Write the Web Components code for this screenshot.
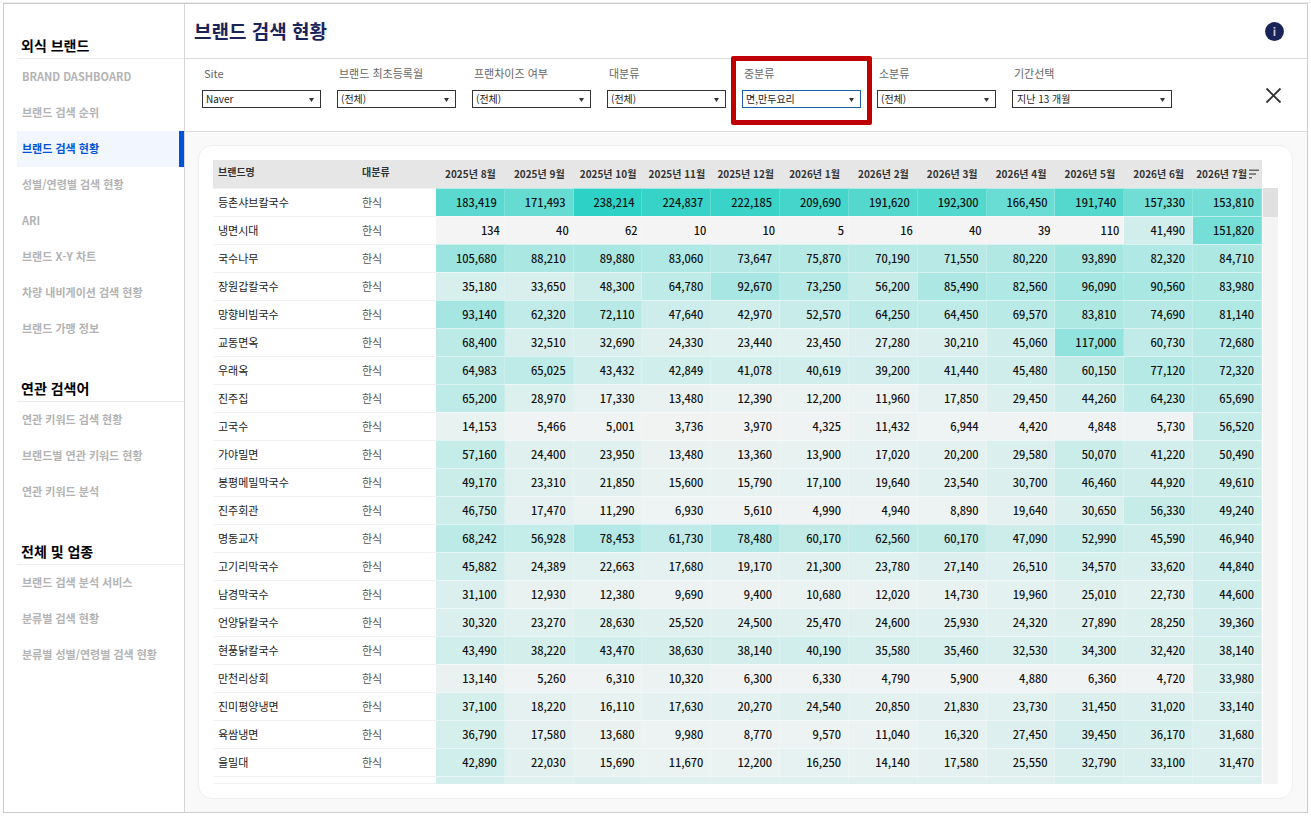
<!DOCTYPE html>
<html lang="ko">
<head>
<meta charset="utf-8">
<meta name="viewport" content="width=device-width, initial-scale=1">
<title>브랜드 검색 현황</title>
<style>
  body {
    margin: 0;
    padding-top: 2px;
    background: #fff;
    color: #333;
    font-family: "Noto Sans CJK KR", "Noto Sans", sans-serif;
    font-size: 11px;
    line-height: 16px;
  }
</style>
</head>
<body>
<app-frame>
  <side-section slot="nav" heading="외식 브랜드">
    <side-link>BRAND DASHBOARD</side-link>
    <side-link>브랜드 검색 순위</side-link>
    <side-link active>브랜드 검색 현황</side-link>
    <side-link>성별/연령별 검색 현황</side-link>
    <side-link>ARI</side-link>
    <side-link>브랜드 X-Y 차트</side-link>
    <side-link>차량 내비게이션 검색 현황</side-link>
    <side-link>브랜드 가맹 정보</side-link>
  </side-section>
  <side-section slot="nav" heading="연관 검색어">
    <side-link>연관 키워드 검색 현황</side-link>
    <side-link>브랜드별 연관 키워드 현황</side-link>
    <side-link>연관 키워드 분석</side-link>
  </side-section>
  <side-section slot="nav" heading="전체 및 업종">
    <side-link>브랜드 검색 분석 서비스</side-link>
    <side-link>분류별 검색 현황</side-link>
    <side-link>분류별 성별/연령별 검색 현황</side-link>
  </side-section>

  <page-header>브랜드 검색 현황</page-header>
  <filter-bar>
    <filter-select label="Site" value="Naver"></filter-select>
    <filter-select label="브랜드 최초등록월" value="(전체)"></filter-select>
    <filter-select label="프랜차이즈 여부" value="(전체)"></filter-select>
    <filter-select label="대분류" value="(전체)"></filter-select>
    <filter-select label="중분류" value="면,만두요리" marked></filter-select>
    <filter-select label="소분류" value="(전체)"></filter-select>
    <filter-select label="기간선택" value="지난 13 개월" wide></filter-select>
  </filter-bar>
  <data-card>
    <heat-table></heat-table>
  </data-card>
</app-frame>

<script>
const MONTHS = [
  '2025년 8월', '2025년 9월', '2025년 10월', '2025년 11월', '2025년 12월', '2026년 1월',
  '2026년 2월', '2026년 3월', '2026년 4월', '2026년 5월', '2026년 6월', '2026년 7월'
];

const BRANDS = [
  ['등촌샤브칼국수', 183419, 171493, 238214, 224837, 222185, 209690, 191620, 192300, 166450, 191740, 157330, 153810],
  ['냉면시대', 134, 40, 62, 10, 10, 5, 16, 40, 39, 110, 41490, 151820],
  ['국수나무', 105680, 88210, 89880, 83060, 73647, 75870, 70190, 71550, 80220, 93890, 82320, 84710],
  ['장원갑칼국수', 35180, 33650, 48300, 64780, 92670, 73250, 56200, 85490, 82560, 96090, 90560, 83980],
  ['망향비빔국수', 93140, 62320, 72110, 47640, 42970, 52570, 64250, 64450, 69570, 83810, 74690, 81140],
  ['교동면옥', 68400, 32510, 32690, 24330, 23440, 23450, 27280, 30210, 45060, 117000, 60730, 72680],
  ['우래옥', 64983, 65025, 43432, 42849, 41078, 40619, 39200, 41440, 45480, 60150, 77120, 72320],
  ['진주집', 65200, 28970, 17330, 13480, 12390, 12200, 11960, 17850, 29450, 44260, 64230, 65690],
  ['고국수', 14153, 5466, 5001, 3736, 3970, 4325, 11432, 6944, 4420, 4848, 5730, 56520],
  ['가야밀면', 57160, 24400, 23950, 13480, 13360, 13900, 17020, 20200, 29580, 50070, 41220, 50490],
  ['봉평메밀막국수', 49170, 23310, 21850, 15600, 15790, 17100, 19640, 23540, 30700, 46460, 44920, 49610],
  ['진주회관', 46750, 17470, 11290, 6930, 5610, 4990, 4940, 8890, 19640, 30650, 56330, 49240],
  ['명동교자', 68242, 56928, 78453, 61730, 78480, 60170, 62560, 60170, 47090, 52990, 45590, 46940],
  ['고기리막국수', 45882, 24389, 22663, 17680, 19170, 21300, 23780, 27140, 26510, 34570, 33620, 44840],
  ['남경막국수', 31100, 12930, 12380, 9690, 9400, 10680, 12020, 14730, 19960, 25010, 22730, 44600],
  ['언양닭칼국수', 30320, 23270, 28630, 25520, 24500, 25470, 24600, 25930, 24320, 27890, 28250, 39360],
  ['현풍닭칼국수', 43490, 38220, 43470, 38630, 38140, 40190, 35580, 35460, 32530, 34300, 32420, 38140],
  ['만천리상회', 13140, 5260, 6310, 10320, 6300, 6330, 4790, 5900, 4880, 6360, 4720, 33980],
  ['진미평양냉면', 37100, 18220, 16110, 17630, 20270, 24540, 20850, 21830, 23730, 31450, 31020, 33140],
  ['육쌈냉면', 36790, 17580, 13680, 9980, 8770, 9570, 11040, 16320, 27450, 39450, 36170, 31680],
  ['을밀대', 42890, 22030, 15690, 11670, 12200, 16250, 14140, 17580, 25550, 32790, 33100, 31470]
];

// Values of the row that is cut off by the bottom of the list, only their colours show
const NEXT_ROW = [38000, 24000, 27000, 24000, 24000, 25000, 24000, 24000, 24000, 32000, 31000, 31000];

const MAX_VALUE = 238214;
const LOW = [244, 244, 244];
const HIGH = [45, 209, 197];

function heatColor(value) {
  const t = value / MAX_VALUE;
  return `rgb(${LOW.map((c, i) => Math.round(c + (HIGH[i] - c) * t)).join(',')})`;
}

class AppFrame extends HTMLElement {
  constructor() {
    super();
    this.attachShadow({ mode: 'open' });
    this.shadowRoot.innerHTML = `
      <style>
        :host {
          display: block;
          border-top: 1px solid #ececec;
          padding: 0 3px;
        }
        .frame {
          display: flex;
          border: 1px solid #ccc;
          min-width: 1240px;
        }
        nav {
          flex: none;
          box-sizing: border-box;
          width: 181px;
          padding-left: 13px;
          border-right: 1px solid #d6d6d6;
        }
        main {
          flex: 1;
          min-width: 0;
          background: #f9f9f9;
        }
      </style>
      <div class="frame">
        <nav><slot name="nav"></slot></nav>
        <main><slot></slot></main>
      </div>
    `;
  }
}

class SideSection extends HTMLElement {
  constructor() {
    super();
    this.attachShadow({ mode: 'open' });
    this.shadowRoot.innerHTML = `
      <style>
        :host {
          display: block;
        }
        h2 {
          box-sizing: border-box;
          height: 55px;
          margin: 0;
          padding: 30px 0 0 4px;
          border-bottom: 1px solid #ebebeb;
          color: #000;
          font-size: 14px;
          line-height: 22px;
          font-weight: 700;
        }
      </style>
      <h2></h2>
      <slot></slot>
    `;
  }

  connectedCallback() {
    this.shadowRoot.querySelector('h2').textContent = this.getAttribute('heading');
  }
}

class SideLink extends HTMLElement {
  constructor() {
    super();
    this.attachShadow({ mode: 'open' });
    this.shadowRoot.innerHTML = `
      <style>
        :host {
          display: block;
        }
        a {
          display: block;
          padding: 9px 0 11px 5px;
          color: #b3b3b3;
          font-weight: 700;
          line-height: 16px;
          text-decoration: none;
          white-space: nowrap;
        }
        :host([active]) a {
          background: #f2f6ff;
          border-right: 5px solid #0052d9;
          color: #0052d9;
        }
      </style>
      <a href="#"><slot></slot></a>
    `;
  }
}

class PageHeader extends HTMLElement {
  constructor() {
    super();
    this.attachShadow({ mode: 'open' });
    this.shadowRoot.innerHTML = `
      <style>
        :host {
          display: flex;
          align-items: center;
          justify-content: space-between;
          height: 54px;
          padding: 0 23px 0 9px;
          border-bottom: 1px solid #dcdcdc;
          background: #fff;
        }
        h1 {
          margin: 0;
          color: #1b2459;
          font-size: 19px;
          line-height: 28px;
          font-weight: 700;
        }
        button {
          padding: 0;
          border: 0;
          background: none;
        }
        svg {
          display: block;
        }
      </style>
      <h1><slot></slot></h1>
      <button aria-label="정보">
        <svg width="19" height="19" viewBox="0 0 19 19">
          <circle cx="9.5" cy="9.5" r="9.4" fill="#1b2459"/>
          <rect x="8.6" y="5" width="1.8" height="1.6" fill="#c5c8dc"/>
          <rect x="8.6" y="7.6" width="1.8" height="6.4" fill="#c5c8dc"/>
        </svg>
      </button>
    `;
  }
}

class FilterBar extends HTMLElement {
  constructor() {
    super();
    this.attachShadow({ mode: 'open' });
    this.shadowRoot.innerHTML = `
      <style>
        :host {
          display: flex;
          align-items: flex-start;
          justify-content: space-between;
          padding: 6px 25px 23px 17px;
          border-bottom: 1px solid #dcdcdc;
          background: #fff;
        }
        .filters {
          display: flex;
          gap: 16px;
        }
        button {
          padding: 0;
          border: 0;
          margin-top: 22px;
          background: none;
        }
        svg {
          display: block;
        }
      </style>
      <div class="filters"><slot></slot></div>
      <button aria-label="닫기">
        <svg width="17" height="17" viewBox="0 0 17 17" fill="none" stroke="#333" stroke-width="1.8">
          <path d="M1.5 1.5 15.5 15.5M15.5 1.5 1.5 15.5"/>
        </svg>
      </button>
    `;
  }
}

class FilterSelect extends HTMLElement {
  constructor() {
    super();
    this.attachShadow({ mode: 'open' });
    this.shadowRoot.innerHTML = `
      <style>
        :host {
          display: block;
          position: relative;
          width: 119px;
        }
        :host([wide]) {
          width: 160px;
        }
        label {
          display: block;
          margin-bottom: 9px;
          padding-left: 2px;
          color: #666;
          white-space: nowrap;
        }
        .box {
          position: relative;
        }
        select {
          display: block;
          appearance: none;
          box-sizing: border-box;
          width: 100%;
          height: 18px;
          margin: 0;
          padding: 0 16px 0 3px;
          border: 1px solid #333;
          border-radius: 0;
          background: #fff;
          color: #222;
          font-family: inherit;
          font-size: 10px;
          line-height: 16px;
        }
        :host([wide]) select {
          padding-left: 4px;
        }
        svg {
          position: absolute;
          right: 7px;
          top: 8px;
          pointer-events: none;
        }
        :host([marked]) select {
          border-color: #1a5fa8;
        }
        /* callout frame round the filter in focus */
        :host([marked])::after {
          content: "";
          position: absolute;
          inset: -9px -11px -17px;
          border: 5px solid #c00000;
          border-radius: 2px;
          pointer-events: none;
        }
      </style>
      <label for="field"></label>
      <div class="box">
        <select id="field"><option></option></select>
        <svg width="5" height="4" viewBox="0 0 5 4"><path d="M0 0H5L2.5 4Z" fill="#333"/></svg>
      </div>
    `;
  }

  connectedCallback() {
    this.shadowRoot.querySelector('label').textContent = this.getAttribute('label');
    this.shadowRoot.querySelector('option').textContent = this.getAttribute('value');
  }
}

class DataCard extends HTMLElement {
  constructor() {
    super();
    this.attachShadow({ mode: 'open' });
    this.shadowRoot.innerHTML = `
      <style>
        :host {
          display: flex;
          gap: 1px;
          margin: 13px 14px 13px 13px;
          padding: 14px;
          border: 1px solid #efefef;
          border-radius: 14px;
          background: #fff;
        }
        ::slotted(*) {
          flex: 1;
          min-width: 0;
        }
        .track {
          flex: none;
          width: 15px;
          margin-top: 28px;
          background: #f4f4f4;
        }
        .thumb {
          height: 29px;
          background: #e0e0e0;
        }
      </style>
      <slot></slot>
      <div class="track"><div class="thumb"></div></div>
    `;
  }
}

class HeatTable extends HTMLElement {
  constructor() {
    super();
    this.attachShadow({ mode: 'open' });
    this.shadowRoot.innerHTML = `
      <style>
        :host {
          display: block;
        }
        table {
          width: 100%;
          table-layout: fixed;
          border-spacing: 0;
        }
        .brand {
          width: 144px;
        }
        .category {
          width: 79px;
        }
        th, td {
          box-sizing: border-box;
          height: 28px;
          padding: 0 0 2px 5px;
          text-align: left;
          white-space: nowrap;
        }
        th {
          padding-bottom: 4px;
          background: #e6e6e6;
          font-size: 10px;
          font-weight: 700;
        }
        th.month {
          padding: 0;
          text-align: center;
        }
        th svg {
          margin-left: 2px;
          vertical-align: -1px;
        }
        td {
          border-top: 1px solid #f2f2f2;
          line-height: 16px;
        }
        td.name {
          color: #222;
        }
        td.kind {
          color: #555;
        }
        td.num {
          padding: 0 7px 2px 0;
          border-color: rgba(255, 255, 255, 0.5);
          border-right: 1px solid rgba(255, 255, 255, 0.2);
          color: #111;
          font-weight: 500;
          text-align: right;
        }
        td.num.short {
          padding-right: 4px;
        }
        tr.cut td {
          height: 8px;
          padding: 0;
          border-bottom: 1px solid #f2f2f2;
        }
        tr.cut td.num {
          border-bottom: 0;
        }
      </style>
      <table>
        <thead><tr></tr></thead>
        <tbody></tbody>
      </table>
    `;
    this.headRow = this.shadowRoot.querySelector('thead tr');
    this.body = this.shadowRoot.querySelector('tbody');
  }

  connectedCallback() {
    this.renderHead();
    this.renderRows();
  }

  renderHead() {
    const sortIcon = `<svg width="10" height="10" viewBox="0 0 10 10" fill="none" stroke="#666" stroke-width="1.6"><path d="M0 1.2H10M0 5H7M0 8.8H3"/></svg>`;
    const months = MONTHS.map((month, index) =>
      `<th class="month">${month}${index === MONTHS.length - 1 ? sortIcon : ''}</th>`
    );
    this.headRow.innerHTML = `<th class="brand">브랜드명</th><th class="category">대분류</th>${months.join('')}`;
  }

  renderRows() {
    BRANDS.forEach(([name, ...values]) => {
      const row = document.createElement('tr');
      const cells = values.map(value => {
        const short = value < 1000 ? ' short' : '';
        return `<td class="num${short}" style="background-color: ${heatColor(value)}">${value.toLocaleString('en-US')}</td>`;
      });
      row.innerHTML = `<td class="name">${name}</td><td class="kind">한식</td>${cells.join('')}`;
      this.body.appendChild(row);
    });

    const cut = document.createElement('tr');
    cut.className = 'cut';
    cut.innerHTML = '<td></td><td></td>' + NEXT_ROW.map(value =>
      `<td class="num" style="background-color: ${heatColor(value)}"></td>`
    ).join('');
    this.body.appendChild(cut);
  }
}

customElements.define('app-frame', AppFrame);
customElements.define('side-section', SideSection);
customElements.define('side-link', SideLink);
customElements.define('page-header', PageHeader);
customElements.define('filter-bar', FilterBar);
customElements.define('filter-select', FilterSelect);
customElements.define('data-card', DataCard);
customElements.define('heat-table', HeatTable);
</script>
</body>
</html>
